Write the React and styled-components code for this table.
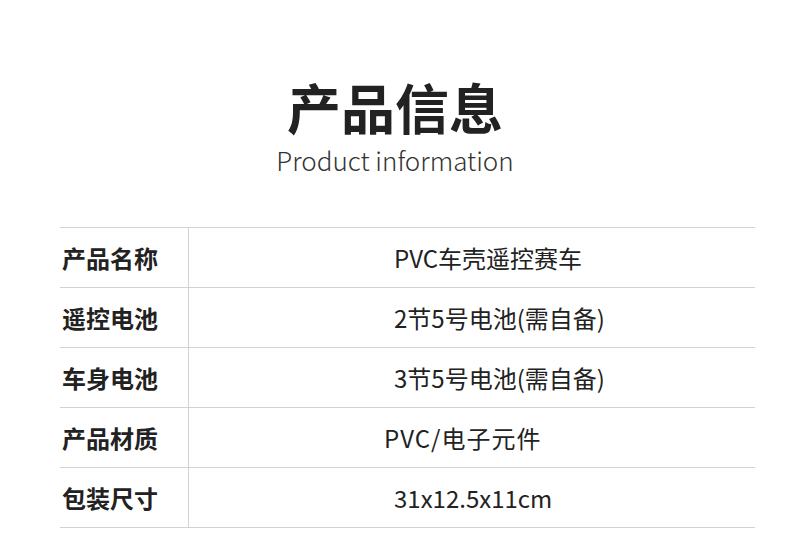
import React from "react";
import styled, { createGlobalStyle } from "styled-components";

const GlobalStyle = createGlobalStyle`
  body {
    margin: 0;
    background: #fff;
    font-family: "Noto Sans CJK SC", "Noto Sans", sans-serif;
    color: #222;
  }
`;

const Page = styled.div`
  width: 790px;
  height: 552px;
  display: flex;
  flex-direction: column;
  align-items: center;
  overflow: hidden;
`;

const Title = styled.h1`
  margin: 75px 0 0;
  font-size: 54px;
  font-weight: 700;
  line-height: 64px;
  color: #222;
`;

const Subtitle = styled.div`
  margin-top: 5px;
  font-size: 26px;
  font-weight: 300;
  line-height: 32px;
  color: #333;
`;

const Table = styled.div`
  align-self: flex-start;
  margin: 51px 0 0 60px;
  width: 695px;
  border-top: 1px solid #d2d2d2;
`;

const Row = styled.div`
  display: grid;
  grid-template-columns: 129px 1fr;
  height: 59px;
  border-bottom: 1px solid #d2d2d2;
`;

const Label = styled.div`
  display: flex;
  align-items: center;
  padding-left: 2px;
  border-right: 1px solid #d2d2d2;
  font-size: 24px;
  font-weight: 700;
  color: #222;
`;

const Value = styled.div`
  display: flex;
  align-items: center;
  padding-left: ${(p) => 205 + (p.$shift || 0)}px;
  font-size: 24px;
  font-weight: 400;
  letter-spacing: ${(p) => p.$spacing || 0}px;
  color: #222;
`;

const rows = [
  { label: "产品名称", value: "PVC车壳遥控赛车" },
  { label: "遥控电池", value: "2节5号电池(需自备)" },
  { label: "车身电池", value: "3节5号电池(需自备)" },
  { label: "产品材质", value: "PVC/电子元件", shift: -10, spacing: 1 },
  { label: "包装尺寸", value: "31x12.5x11cm" },
];

export default function App() {
  return (
    <Page>
      <GlobalStyle />
      <Title>产品信息</Title>
      <Subtitle>Product information</Subtitle>
      <Table>
        {rows.map((r) => (
          <Row key={r.label}>
            <Label>{r.label}</Label>
            <Value $shift={r.shift} $spacing={r.spacing}>
              {r.value}
            </Value>
          </Row>
        ))}
      </Table>
    </Page>
  );
}
